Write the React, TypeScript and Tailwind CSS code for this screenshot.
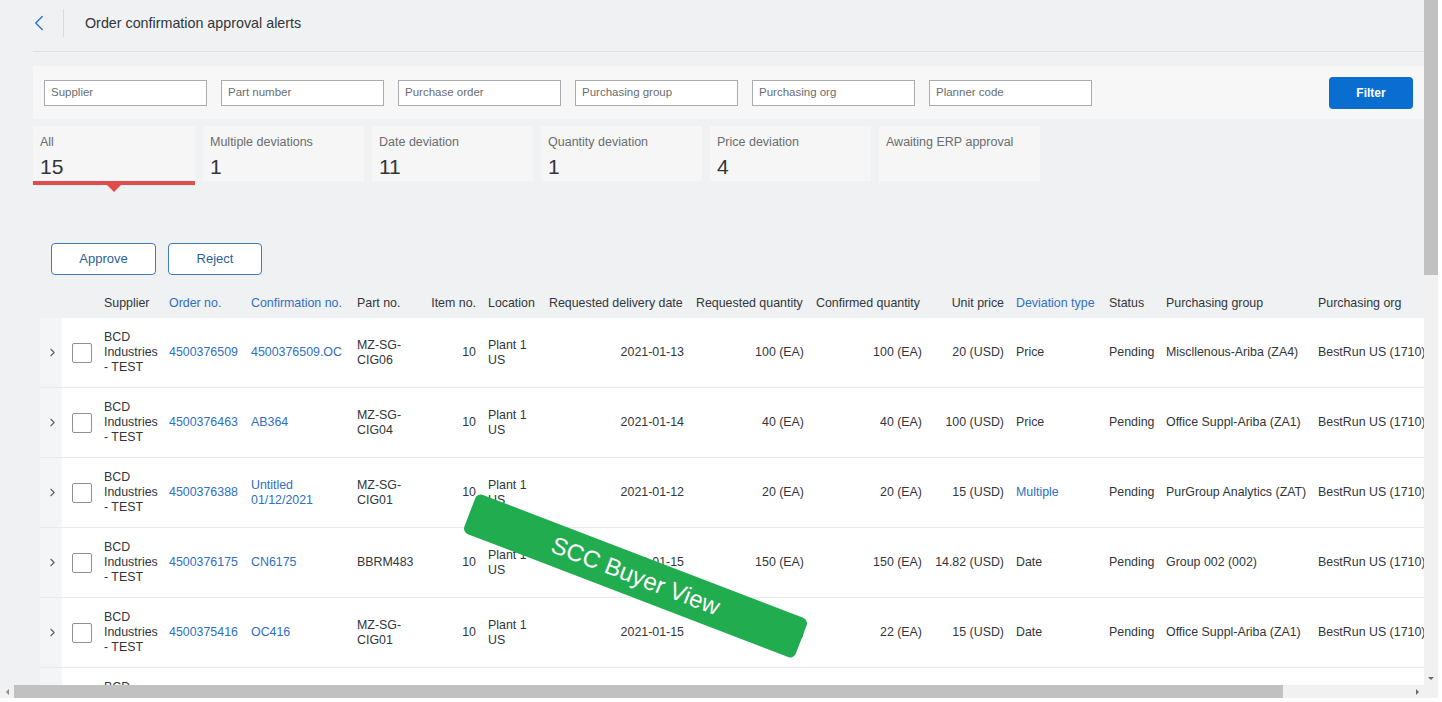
import React from 'react';
import { ChevronLeft, ChevronRight } from 'lucide-react';

const filters = ['Supplier', 'Part number', 'Purchase order', 'Purchasing group', 'Purchasing org', 'Planner code'];

const tabs = [
    { label: 'All', count: '15' },
    { label: 'Multiple deviations', count: '1' },
    { label: 'Date deviation', count: '11' },
    { label: 'Quantity deviation', count: '1' },
    { label: 'Price deviation', count: '4' },
    { label: 'Awaiting ERP approval', count: '' },
];

const rows = [
    { order: '4500376509', conf: ['4500376509.OC'], part: ['MZ-SG-', 'CIG06'], date: '2021-01-13', req: '100 (EA)', cnf: '100 (EA)', price: '20 (USD)', dev: 'Price', group: 'Miscllenous-Ariba (ZA4)' },
    { order: '4500376463', conf: ['AB364'], part: ['MZ-SG-', 'CIG04'], date: '2021-01-14', req: '40 (EA)', cnf: '40 (EA)', price: '100 (USD)', dev: 'Price', group: 'Office Suppl-Ariba (ZA1)' },
    { order: '4500376388', conf: ['Untitled', '01/12/2021'], part: ['MZ-SG-', 'CIG01'], date: '2021-01-12', req: '20 (EA)', cnf: '20 (EA)', price: '15 (USD)', dev: 'Multiple', group: 'PurGroup Analytics (ZAT)' },
    { order: '4500376175', conf: ['CN6175'], part: ['BBRM483'], date: '2021-01-15', req: '150 (EA)', cnf: '150 (EA)', price: '14.82 (USD)', dev: 'Date', group: 'Group 002 (002)' },
    { order: '4500375416', conf: ['OC416'], part: ['MZ-SG-', 'CIG01'], date: '2021-01-15', req: '22 (EA)', cnf: '22 (EA)', price: '15 (USD)', dev: 'Date', group: 'Office Suppl-Ariba (ZA1)' },
    { order: '4500375390', conf: ['OC390'], part: ['MZ-SG-', 'CIG01'], date: '2021-01-15', req: '10 (EA)', cnf: '10 (EA)', price: '15 (USD)', dev: 'Date', group: 'Office Suppl-Ariba (ZA1)' },
];

const gridCols = 'grid grid-cols-[22px_36px_65px_82px_106px_69px_62px_61px_147px_120px_118px_82px_93px_57px_152px_140px]';
const link = 'text-[#2f6fc4]';

export default function App() {
    return (
        <div className="relative w-[1442px] h-[702px] flex bg-white overflow-hidden text-[#32363a] font-['Liberation_Sans',Arial,sans-serif]">
            <div className="w-[1424px] h-[702px] flex flex-col">
                <div className="h-[685px] bg-[#eff1f2] pl-[33px] flex flex-col overflow-hidden">
                    {/* header */}
                    <div className="h-[52px] border-b border-[#dfe2e4] flex items-center shrink-0">
                        <ChevronLeft className="w-[26px] h-[26px] text-[#2a73d0] -ml-[7px] mb-[5px]" strokeWidth={1.3} />
                        <div className="w-px h-[28px] bg-[#d9dcde] ml-[11px] mb-[5px]" />
                        <span className="ml-[21px] text-[14.3px] mb-[4px]">Order confirmation approval alerts</span>
                    </div>

                    {/* filter bar */}
                    <div className="mt-[14px] h-[53px] bg-[#f7f7f7] flex items-center pl-[11px] pr-[11px] shrink-0">
                        <div className="flex gap-[14px]">
                            {filters.map((f) => (
                                <div key={f} className="w-[163px] h-[26px] bg-white border border-[#a8acb0] flex items-center px-[6px] pt-px text-[11.5px] text-[#6a6d70]">
                                    {f}
                                </div>
                            ))}
                        </div>
                        <button className="ml-auto w-[84px] h-[32px] rounded-[4px] bg-[#0a6ed1] text-white text-[12px] font-bold">Filter</button>
                    </div>

                    {/* tabs */}
                    <div className="mt-[7px] flex gap-[8px] shrink-0">
                        {tabs.map((t, i) => (
                            <div key={t.label} className="relative">
                                <div className={`${i === 0 ? 'w-[162px]' : 'w-[161px]'} h-[55px] bg-[#f6f6f6] px-[7px] pt-[8px]`}>
                                    <div className="text-[12.5px] text-[#6a6d70] leading-[16px]">{t.label}</div>
                                    <div className="text-[21px] leading-[26px] mt-[4px]">{t.count}</div>
                                </div>
                                {i === 0 && (
                                    <>
                                        <div className="h-[4px] bg-[#e04b4b]" />
                                        <div className="absolute left-[74px] top-[59px] w-0 h-0 border-l-[7px] border-r-[7px] border-t-[7px] border-l-transparent border-r-transparent border-t-[#e04b4b]" />
                                    </>
                                )}
                            </div>
                        ))}
                    </div>

                    {/* actions */}
                    <div className="mt-[58px] ml-[18px] flex gap-[12px] shrink-0">
                        <button className="w-[105px] h-[32px] border border-[#3d7bc4] rounded-[4px] bg-white text-[13px] text-[#2c5f9a]">Approve</button>
                        <button className="w-[94px] h-[32px] border border-[#3d7bc4] rounded-[4px] bg-white text-[13px] text-[#2c5f9a]">Reject</button>
                    </div>

                    {/* table */}
                    <div className="mt-[14px] ml-[7px] text-[12.4px] leading-[15px] overflow-hidden shrink-0">
                        <div className={`${gridCols} h-[29px] items-center`}>
                            <div />
                            <div />
                            <div className="px-[6px]">Supplier</div>
                            <div className={`px-[6px] ${link}`}>Order no.</div>
                            <div className={`px-[6px] ${link}`}>Confirmation no.</div>
                            <div className="px-[6px]">Part no.</div>
                            <div className="px-[6px] text-right">Item no.</div>
                            <div className="px-[6px]">Location</div>
                            <div className="px-[6px] whitespace-nowrap">Requested delivery date</div>
                            <div className="px-[6px] whitespace-nowrap">Requested quantity</div>
                            <div className="px-[6px] whitespace-nowrap">Confirmed quantity</div>
                            <div className="px-[6px] text-right whitespace-nowrap">Unit price</div>
                            <div className={`px-[6px] whitespace-nowrap ${link}`}>Deviation type</div>
                            <div className="px-[6px]">Status</div>
                            <div className="px-[6px] whitespace-nowrap">Purchasing group</div>
                            <div className="px-[6px] whitespace-nowrap">Purchasing org</div>
                        </div>

                        {rows.map((r) => (
                            <div key={r.order} className={`${gridCols} h-[70px] items-center border-b border-[#e8eaeb] bg-white`}>
                                <div className="h-full bg-[#f4f5f6] flex items-center justify-center">
                                    <ChevronRight className="w-[13px] h-[13px] text-[#5a5e62] ml-[2px]" strokeWidth={2} />
                                </div>
                                <div className="h-full flex items-center pl-[10px]">
                                    <div className="w-[20px] h-[20px] border border-[#8d9297] rounded-[2px] bg-white" />
                                </div>
                                <div className="px-[6px]">
                                    <div>BCD</div>
                                    <div>Industries</div>
                                    <div className="whitespace-nowrap">- TEST</div>
                                </div>
                                <div className={`px-[6px] ${link}`}>{r.order}</div>
                                <div className={`px-[6px] ${link}`}>
                                    {r.conf.map((c) => (
                                        <div key={c}>{c}</div>
                                    ))}
                                </div>
                                <div className="px-[6px]">
                                    {r.part.map((p) => (
                                        <div key={p}>{p}</div>
                                    ))}
                                </div>
                                <div className="px-[6px] text-right">10</div>
                                <div className="px-[6px]">
                                    <div className="whitespace-nowrap">Plant 1</div>
                                    <div>US</div>
                                </div>
                                <div className="px-[6px] text-right">{r.date}</div>
                                <div className="px-[6px] text-right">{r.req}</div>
                                <div className="px-[6px] text-right">{r.cnf}</div>
                                <div className="px-[6px] text-right whitespace-nowrap">{r.price}</div>
                                <div className={`px-[6px] ${r.dev === 'Multiple' ? link : ''}`}>{r.dev}</div>
                                <div className="px-[6px]">Pending</div>
                                <div className="px-[6px] whitespace-nowrap">{r.group}</div>
                                <div className="px-[6px] whitespace-nowrap">BestRun US (1710)</div>
                            </div>
                        ))}
                    </div>
                </div>

                {/* horizontal scrollbar */}
                <div className="h-[13px] bg-[#f1f1f1] flex items-center">
                    <div className="w-[14px] flex justify-center">
                        <div className="w-0 h-0 border-t-[3px] border-b-[3px] border-r-[3px] border-t-transparent border-b-transparent border-r-[#8a8a8a]" />
                    </div>
                    <div className="w-[1269px] h-full bg-[#c1c1c1]" />
                    <div className="ml-auto w-[14px] flex justify-center">
                        <div className="w-0 h-0 border-t-[3px] border-b-[3px] border-l-[3px] border-t-transparent border-b-transparent border-l-[#6a6a6a]" />
                    </div>
                </div>
                <div className="flex-1 bg-white" />
            </div>

            {/* vertical scrollbar */}
            <div className="w-[14px] h-[698px] bg-[#f1f1f1] flex flex-col items-center">
                <div className="w-full h-[275px] bg-[#c1c1c1]" />
                <div className="mt-auto mb-[18px] w-0 h-0 border-l-[3px] border-r-[3px] border-t-[3px] border-l-transparent border-r-transparent border-t-[#6a6a6a]" />
            </div>

            {/* watermark */}
            <div className="absolute left-[458px] top-[555px] w-[355px] h-[42px] rotate-[21deg] rounded-[6px] bg-[#21ad4f] flex items-center justify-center text-white text-[24px] font-['Liberation_Sans',Arial,sans-serif]">
                SCC Buyer View
            </div>
        </div>
    );
}
